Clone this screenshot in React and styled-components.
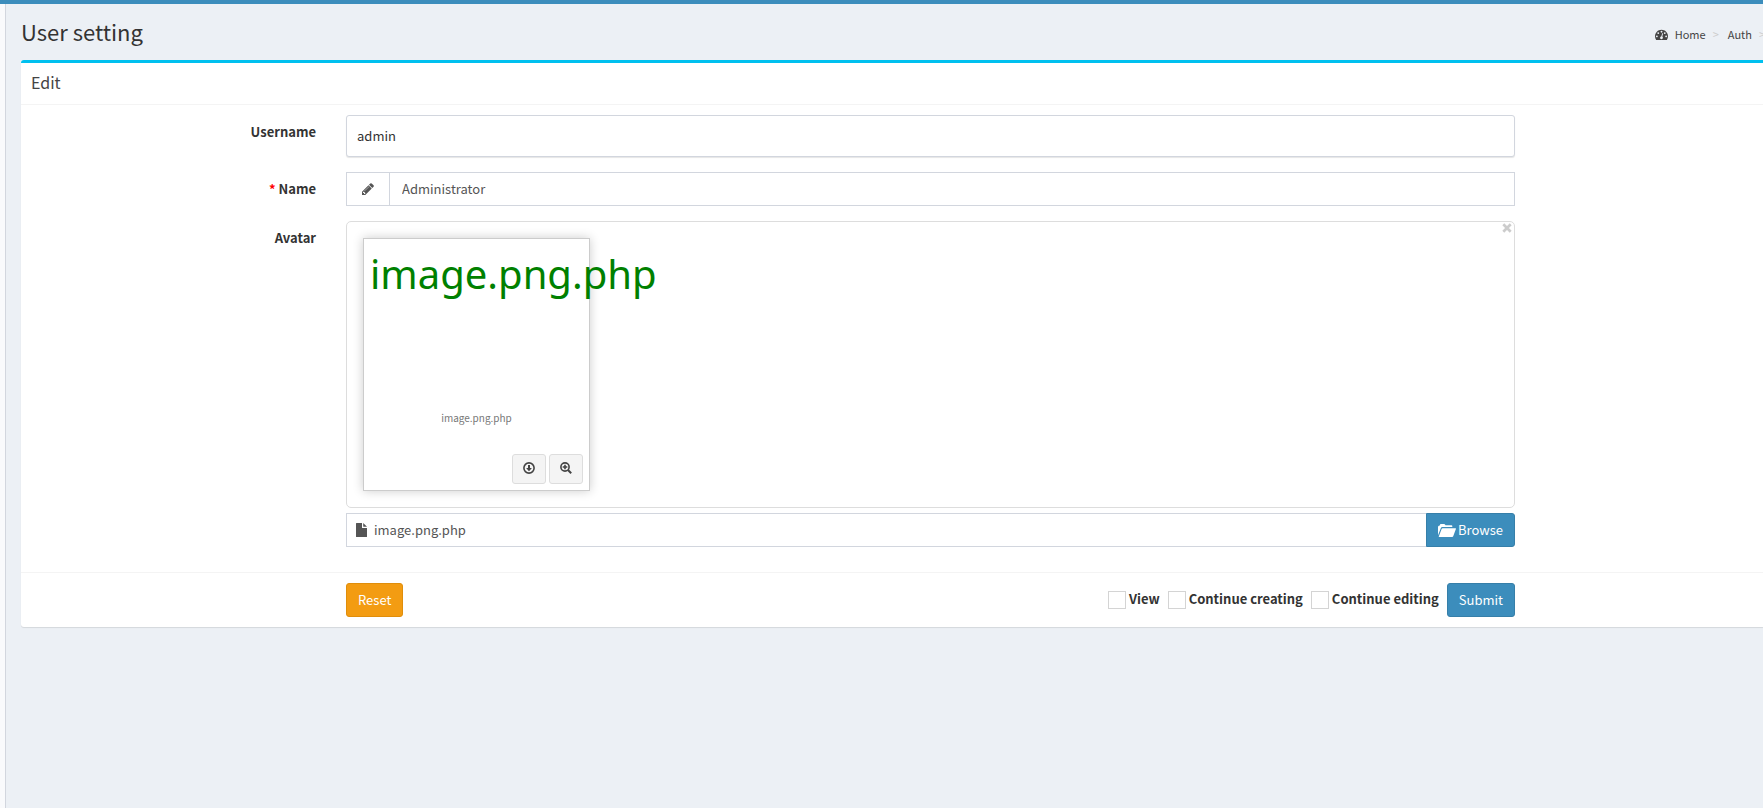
import React from "react";
import styled, { createGlobalStyle } from "styled-components";

const GlobalStyle = createGlobalStyle`
  *, *::before, *::after { box-sizing: border-box; }
  body {
    margin: 0;
    background: #ecf0f5;
    color: #333;
    font-family: "Source Sans Pro", "Noto Sans CJK SC", "Liberation Sans", sans-serif;
    font-size: 13px;
    line-height: 20px;
    overflow-x: hidden;
  }
  button, input { font: inherit; color: inherit; }
`;

const Page = styled.div`
  min-height: 100vh;
  display: flex;
  flex-direction: column;
`;

const TopBar = styled.div`
  height: 4px;
  background: #3c8dbc;
`;

const Body = styled.div`
  flex: 1;
  display: flex;
`;

const Sidebar = styled.aside`
  flex: none;
  width: 6px;
  background: #f9fafc;
  border-right: 1px solid #d2d6de;
`;

const Content = styled.main`
  flex: 1;
  min-width: 0;
  padding-left: 15px;
`;

const PageHeader = styled.header`
  height: 56px;
  display: flex;
  align-items: center;
  justify-content: space-between;
  overflow: hidden;
`;

const PageTitle = styled.h1`
  margin: 0;
  padding-bottom: 2px;
  font-size: 22px;
  line-height: 26px;
  font-weight: 400;
`;

const Breadcrumb = styled.nav`
  display: flex;
  align-items: center;
  margin-right: -2px;
  padding-top: 4px;
  font-size: 11px;
  line-height: 16px;
  color: #444;

  a {
    display: flex;
    align-items: center;
    gap: 7px;
    color: #444;
    text-decoration: none;
  }
`;

const Separator = styled.span`
  padding: 0 9px 0 7px;
  color: #ccc;

  &:last-child { padding-right: 0; }
`;

const Box = styled.section`
  background: #fff;
  border-top: 3px solid #00c0ef;
  border-radius: 3px 0 0 3px;
  box-shadow: 0 1px 1px rgba(0, 0, 0, 0.1);
`;

const BoxHeader = styled.div`
  padding: 9px 10px 12px;
  border-bottom: 1px solid #f4f4f4;
`;

const BoxTitle = styled.h2`
  margin: 0;
  font-size: 16px;
  line-height: 20px;
  font-weight: 400;
  color: #444;
`;

const Fields = styled.div`
  display: flex;
  flex-direction: column;
  gap: 15px;
  padding: 10px 0 25px;
`;

const Row = styled.div`
  display: grid;
  grid-template-columns: minmax(0, 295fr) minmax(0, 1169fr) minmax(0, 218fr);
  column-gap: 30px;
`;

const FieldLabel = styled.label`
  padding-top: 7px;
  text-align: right;
  font-weight: 700;
`;

const Required = styled.span`
  color: #f00;
`;

const FieldCell = styled.div`
  grid-column: 2;
  min-width: 0;
`;

const PlainInput = styled.input`
  display: block;
  width: 100%;
  height: 42px;
  padding: 9px 10px 11px;
  border: 1px solid #d2d6de;
  border-radius: 3px;
  background: #fff;
  box-shadow: 0 1px 1px rgba(0, 0, 0, 0.1);
`;

const InputGroup = styled.div`
  display: flex;
  height: 34px;
  border: 1px solid #d2d6de;
  background: #fff;
  color: #555;
`;

const Addon = styled.span`
  flex: none;
  width: 43px;
  display: flex;
  align-items: center;
  justify-content: center;
  border-right: 1px solid #d2d6de;
`;

const BareInput = styled.input`
  flex: 1;
  min-width: 0;
  border: 0;
  background: transparent;
  padding: 0 ${(p) => p.$pad || 0}px;
`;

const Preview = styled.div`
  position: relative;
  display: flex;
  margin-bottom: 5px;
  padding: 16px;
  border: 1px solid #ddd;
  border-radius: 5px;
`;

const CloseButton = styled.button`
  position: absolute;
  top: 0;
  right: 2px;
  padding: 0;
  border: 0;
  background: none;
  display: flex;
  width: 10px;
  height: 12px;
  align-items: center;
  justify-content: center;
  color: #ccc;
`;

const Thumb = styled.figure`
  width: 227px;
  height: 253px;
  margin: 0;
  padding: 6px;
  display: flex;
  flex-direction: column;
  border: 1px solid #ccc;
  box-shadow: 0 0 10px rgba(0, 0, 0, 0.2);
`;

const AltText = styled.div`
  height: 160px;
  font-family: "Noto Sans", sans-serif;
  font-size: 40px;
  line-height: 58px;
  color: green;
  white-space: nowrap;
`;

const Caption = styled.figcaption`
  flex: 1;
  padding-top: 5px;
  text-align: center;
  font-size: 10px;
  line-height: 16px;
  color: #777;
`;

const ThumbActions = styled.div`
  display: flex;
  justify-content: flex-end;
  gap: 3px;
`;

const IconButton = styled.button`
  width: 34px;
  height: 30px;
  padding: 0 0 2px;
  display: flex;
  align-items: center;
  justify-content: center;
  border: 1px solid #ddd;
  border-radius: 3px;
  background: #f4f4f4;
  color: #444;
`;

const FileRow = styled.div`
  display: flex;
`;

const FileCaption = styled(InputGroup)`
  flex: 1;
  align-items: center;
  gap: 7px;
  padding-left: 9px;
  border-right: 0;
`;

const tones = {
  primary: ["#3c8dbc", "#367fa9"],
  warning: ["#f39c12", "#e08e0b"],
};

const Button = styled.button`
  height: 34px;
  padding: 0 11px;
  display: flex;
  align-items: center;
  gap: 2px;
  border: 1px solid ${(p) => tones[p.$tone][1]};
  border-radius: ${(p) => (p.$attached ? "0 3px 3px 0" : "3px")};
  background: ${(p) => tones[p.$tone][0]};
  color: #fff;
`;

const Footer = styled(Row)`
  padding: 10px 0;
  border-top: 1px solid #f4f4f4;
`;

const FooterBar = styled(FieldCell)`
  display: flex;
  align-items: center;
  justify-content: space-between;
`;

const SubmitGroup = styled.div`
  display: flex;
  align-items: center;
  gap: 8px;
`;

const CheckLabel = styled.label`
  display: flex;
  align-items: center;
  gap: 3px;
  font-weight: 700;

  span { padding-bottom: 3px; }
`;

const Checkbox = styled.input`
  appearance: none;
  width: 18px;
  height: 18px;
  margin: 0;
  border: 1px solid #d4d4d4;
  background: #fff;

  &:checked { background: #3c8dbc; }
`;

const Svg = styled.svg`
  display: block;
  flex: none;
  fill: currentColor;
`;

const DashboardIcon = () => (
  <Svg width="13" height="13" viewBox="0 0 1792 1792" aria-hidden="true">
    <path d="M384 1152q0-53-37.5-90.5t-90.5-37.5-90.5 37.5-37.5 90.5 37.5 90.5 90.5 37.5 90.5-37.5 37.5-90.5zm192-448q0-53-37.5-90.5t-90.5-37.5-90.5 37.5-37.5 90.5 37.5 90.5 90.5 37.5 90.5-37.5 37.5-90.5zm428 481l101-382q6-26-7.5-48.5t-38.5-29.5-48 6.5-30 39.5l-101 382q-60 5-107 43.5t-63 98.5q-20 77 20 146t117 89 146-20 89-117q16-60-6-117t-72-91zm660-33q0-53-37.5-90.5t-90.5-37.5-90.5 37.5-37.5 90.5 37.5 90.5 90.5 37.5 90.5-37.5 37.5-90.5zm-640-640q0-53-37.5-90.5t-90.5-37.5-90.5 37.5-37.5 90.5 37.5 90.5 90.5 37.5 90.5-37.5 37.5-90.5zm448 192q0-53-37.5-90.5t-90.5-37.5-90.5 37.5-37.5 90.5 37.5 90.5 90.5 37.5 90.5-37.5 37.5-90.5zm320 448q0 261-141 483-19 29-54 29h-1402q-35 0-54-29-141-221-141-483 0-182 71-348t191-286 286-191 348-71 348 71 286 191 191 286 71 348z" />
  </Svg>
);

const PencilIcon = () => (
  <Svg width="14" height="14" viewBox="0 0 1792 1792" aria-hidden="true">
    <path d="M491 1536l91-91-235-235-91 91v107h128v128h107zm523-928q0-22-22-22-10 0-17 7l-542 542q-7 7-7 17 0 22 22 22 10 0 17-7l542-542q7-7 7-17zm-54-192l416 416-832 832h-416v-416zm683 96q0 53-37 90l-166 166-416-416 166-165q36-38 90-38 53 0 91 38l235 234q37 39 37 91z" />
  </Svg>
);

const CloseIcon = () => (
  <Svg width="10" height="10" viewBox="0 0 10 10" aria-hidden="true">
    <path d="M1.3 1.3L8.7 8.7M8.7 1.3L1.3 8.7" stroke="currentColor" strokeWidth="2.7" />
  </Svg>
);

const DownloadIcon = () => (
  <Svg width="12" height="12" viewBox="0 0 12 12" aria-hidden="true">
    <circle cx="6" cy="6" r="5.1" fill="none" stroke="currentColor" strokeWidth="1.6" />
    <path d="M5 3h2v3h1.9L6 9.2 3.1 6H5z" />
  </Svg>
);

const ZoomInIcon = () => (
  <Svg width="12" height="12" viewBox="0 0 12 12" aria-hidden="true">
    <circle cx="5" cy="5" r="4.1" fill="none" stroke="currentColor" strokeWidth="1.6" />
    <path d="M4.2 2.7h1.6v1.5h1.5v1.6H5.8v1.5H4.2V5.8H2.7V4.2h1.5z" />
    <path d="M8 8l3.2 3.2" stroke="currentColor" strokeWidth="2" />
  </Svg>
);

const FileIcon = () => (
  <Svg width="11" height="14" viewBox="0 0 11 14" aria-hidden="true">
    <path d="M.5 0H6v4.500q0 .5.5.5H11v8.500q0 .5-.5.5H.5q-.5 0-.5-.5V.5Q0 0 .5 0zM7.200 0L11 3.800H7.700q-.5 0-.5-.5z" />
  </Svg>
);

const FolderOpenIcon = () => (
  <Svg width="18" height="13" viewBox="0 0 18 13" aria-hidden="true">
    <path d="M0 11.300V3q0-.5.5-.9L2 1.200V.8Q2 0 2.800 0h3.400q.6 0 .8.400l.5.800h6q.8 0 .8.800v1H4.200q-.9 0-1.300.9L.5 10z" />
    <path d="M4.600 4.200h12.800q.8 0 .5.800l-2.700 7.300q-.3.700-1 .7H1.300q-.7 0-.5-.6L3.600 4.900q.3-.7 1-.7z" />
  </Svg>
);

const followUps = ["View", "Continue creating", "Continue editing"];

export default function App() {
  return (
    <Page>
      <GlobalStyle />
      <TopBar />
      <Body>
        <Sidebar />
        <Content>
          <PageHeader>
            <PageTitle>User setting</PageTitle>
            <Breadcrumb aria-label="Breadcrumb">
              <a href="#home"><DashboardIcon />Home</a>
              <Separator>&gt;</Separator>
              <a href="#auth">Auth</a>
              <Separator>&gt;</Separator>
            </Breadcrumb>
          </PageHeader>

          <Box as="form" onSubmit={(e) => e.preventDefault()}>
            <BoxHeader>
              <BoxTitle>Edit</BoxTitle>
            </BoxHeader>

            <Fields>
              <Row>
                <FieldLabel htmlFor="username">Username</FieldLabel>
                <FieldCell>
                  <PlainInput id="username" defaultValue="admin" readOnly />
                </FieldCell>
              </Row>
              <Row>
                <FieldLabel htmlFor="name"><Required>*</Required> Name</FieldLabel>
                <FieldCell>
                  <InputGroup>
                    <Addon><PencilIcon /></Addon>
                    <BareInput id="name" $pad={12} defaultValue="Administrator" />
                  </InputGroup>
                </FieldCell>
              </Row>
              <Row>
                <FieldLabel htmlFor="avatar">Avatar</FieldLabel>
                <FieldCell>
                  <Preview>
                    <CloseButton type="button" aria-label="Remove"><CloseIcon /></CloseButton>
                    <Thumb>
                      <AltText>image.png.php</AltText>
                      <Caption>image.png.php</Caption>
                      <ThumbActions>
                        <IconButton type="button" aria-label="Download"><DownloadIcon /></IconButton>
                        <IconButton type="button" aria-label="Zoom in"><ZoomInIcon /></IconButton>
                      </ThumbActions>
                    </Thumb>
                  </Preview>
                  <FileRow>
                    <FileCaption>
                      <FileIcon />
                      <BareInput id="avatar" defaultValue="image.png.php" readOnly />
                    </FileCaption>
                    <Button type="button" $tone="primary" $attached>
                      <FolderOpenIcon />Browse
                    </Button>
                  </FileRow>
                </FieldCell>
              </Row>
            </Fields>

            <Footer>
              <FooterBar>
                <Button type="reset" $tone="warning">Reset</Button>
                <SubmitGroup>
                  {followUps.map((text) => (
                    <CheckLabel key={text}>
                      <Checkbox type="checkbox" />
                      <span>{text}</span>
                    </CheckLabel>
                  ))}
                  <Button type="submit" $tone="primary">Submit</Button>
                </SubmitGroup>
              </FooterBar>
            </Footer>
          </Box>
        </Content>
      </Body>
    </Page>
  );
}
